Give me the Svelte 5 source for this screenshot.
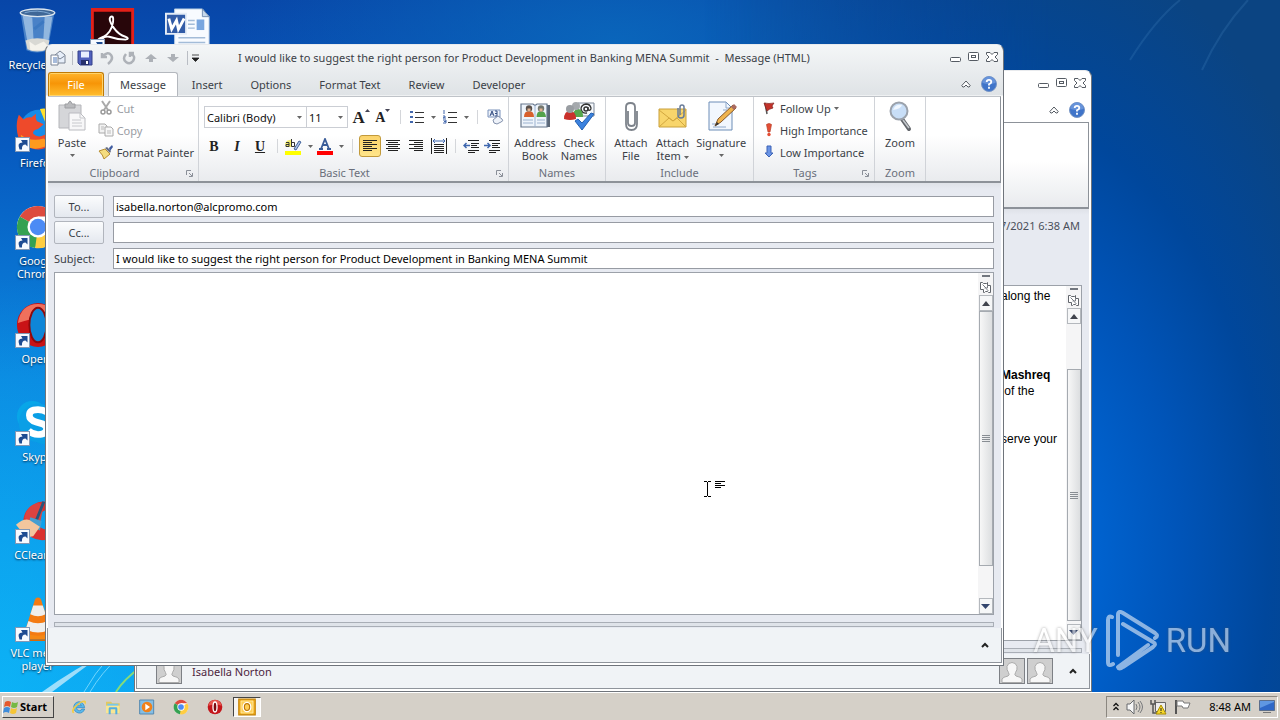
<script>
  const subject = 'I would like to suggest the right person for Product Development in Banking MENA Summit';

  // one list per desktop column
  const columns = [
    [
      { icon: 'bin', label: 'Recycle Bin' },
      { icon: 'firefox', label: 'Firefox', linked: true },
      { icon: 'chrome', label: 'Google Chrome', linked: true },
      { icon: 'opera', label: 'Opera', linked: true },
      { icon: 'skype', label: 'Skype', linked: true },
      { icon: 'ccleaner', label: 'CCleaner', linked: true },
      { icon: 'vlc', label: 'VLC media player', linked: true }
    ],
    [{ icon: 'acrobat', label: 'Acrobat', linked: true }],
    [{ icon: 'word', label: 'Document' }]
  ];

  const tabs = ['Message', 'Insert', 'Options', 'Format Text', 'Review', 'Developer'];
  const tasks = ['explorer', 'folder', 'player', 'chrome', 'operaRed'];

  let activeTab = $state('Message');
  let to = $state('isabella.norton@alcpromo.com');
  let cc = $state('');
  let subjectText = $state(subject);
  let align = $state('left');
</script>

{#snippet caret()}
  <svg class="caret" width="5" height="3" viewBox="0 0 5 3"><path d="M0 0h5L2.500 3z" fill="#666" /></svg>
{/snippet}

{#snippet launcher()}
  <button class="launcher" aria-label="More options">
    <svg width="7" height="7" viewBox="0 0 7 7"><path d="M.5 5V.5H5M3 3l3 3M6.500 3v3.500H3" fill="none" stroke="#8a8f98" /></svg>
  </button>
{/snippet}

{#snippet windowButtons()}
  <div class="window-buttons">
    <button aria-label="Minimize"><svg width="12" height="12" viewBox="0 0 12 12"><rect x=".5" y="6.500" width="10" height="4" rx="1" fill="#fff" stroke="#555b63" /></svg></button>
    <button aria-label="Maximize"><svg width="12" height="12" viewBox="0 0 12 12"><rect x=".5" y="1.500" width="10" height="8" rx="1" fill="#fff" stroke="#555b63" /><rect x="3.500" y="4.500" width="4" height="2" fill="none" stroke="#555b63" /></svg></button>
    <button aria-label="Close"><svg width="12" height="12" viewBox="0 0 12 12"><path d="M.5 1.500h3.500l2 2 2-2h3.500v2L9 6l2.500 2.500v2H8l-2-2-2 2H.5v-2L3 6 .5 3.500z" fill="#fff" stroke="#555b63" /></svg></button>
  </div>
{/snippet}

{#snippet ribbonHelp()}
  <div class="ribbon-help">
    <button aria-label="Minimize the ribbon"><svg width="10" height="8" viewBox="0 0 10 8"><path d="M.8 5.500L5 1l4.200 4.500-1 1.500H7L5 5 3 7H1.800z" fill="#fff" stroke="#555b63" /></svg></button>
    <button aria-label="Help">
      <svg width="16" height="16" viewBox="0 0 16 16"><circle cx="8" cy="8" r="7.500" fill="#3f74c9" stroke="#7795c5" /><path d="M1.500 7a6.500 6.500 0 0 1 13 0Q8 9 1.500 7z" fill="#6793da" /><path d="M5.700 6Q5.700 3.800 8 3.800T10.300 6Q10.300 7.200 8 8.300V9.500M8 10.800v1.900" fill="none" stroke="#fff" stroke-width="1.800" /></svg>
    </button>
  </div>
{/snippet}

{#snippet avatar()}
  <svg class="avatar" width="26" height="26" viewBox="0 0 26 26">
    <rect x=".5" y=".5" width="25" height="25" fill="#cfcfcf" stroke="#7d8085" />
    <path d="M3 24.500V21q1-2 6-3 2-1 .5-3.500Q7.500 12 8 8.500 9 4.500 13 4.500t5 4q.5 3.500-1.500 6-1.500 2.500.5 3.500 5 1 6 3v3.500z" fill="#f7f7f7" stroke="#aaa" />
  </svg>
{/snippet}

{#snippet collapse()}
  <button class="collapse" aria-label="Expand people pane"><svg width="8" height="6" viewBox="0 0 8 6"><path d="M1 5l3-3 3 3" fill="none" stroke="#222" stroke-width="2" /></svg></button>
{/snippet}

{#snippet scrollbar(kind)}
  <div class="scrollbar {kind}">
    <div class="split"></div>
    <button class="ruler" aria-label="Select browse object">
      <svg width="14" height="14" viewBox="0 0 14 14"><path d="M1.500 2.500h2l1 1h3l1-1V5.500h3v7h-2l-1-1h-2l-1 1h-1v-3h-3z" fill="#fff" stroke="#62666d" /><path d="M3.500 4.500l4 4M8.500 5.500v2.500h-3M7.500 9.500l2 1" fill="none" stroke="#7a7e85" /></svg>
    </button>
    <button class="step" aria-label="Scroll up"><svg width="8" height="5" viewBox="0 0 8 5"><path d="M0 5h8L4 0z" fill="#40444d" /></svg></button>
    <div class="track">
      <div class="thumb"><svg width="8" height="7" viewBox="0 0 8 7"><path d="M0 .5h8M0 2.500h8M0 4.500h8M0 6.500h8" stroke="#888d93" /></svg></div>
    </div>
    <button class="step" aria-label="Scroll down"><svg width="9" height="5" viewBox="0 0 9 5"><path d="M0 0h9L4.500 5z" fill="#34466e" /></svg></button>
  </div>
{/snippet}

{#snippet appIcon(name, size)}
  <svg width={size} height={size} viewBox="0 0 48 48">
    {#if name === 'bin'}
      <path d="M6 6l6 38q11 5 22 0l7-38z" fill="#6d9fd6" fill-opacity=".65" />
      <path d="M8 8l6 33 6 3-2-34zM31 9l-2 33 5-2 5-31z" fill="#d9ebf8" fill-opacity=".5" />
      <path d="M11 34q12-5 25 0l-2 9q-11 5-21 0z" fill="#d9d9d4" />
      <path d="M15 35l6 4 9-4 4 4-4 5H16z" fill="#f5f3ec" />
      <path d="M20 22l10-8" fill="none" stroke="#2a6cba" stroke-width="3" opacity=".4" />
      <ellipse cx="23.500" cy="5" rx="18" ry="4" fill="#3f6797" stroke="#dbe5ee" stroke-width="1.500" />
      <path d="M10 5q13-4 27 1" fill="none" stroke="#7fa9d5" />
    {:else if name === 'firefox'}
      <circle cx="25" cy="24" r="20" fill="#168ce8" />
      <path d="M26 3q14-2 19 10 4 14-4 24l-9-19z" fill="#ffe02c" />
      <path d="M4 9l5 5q4-3 8-2l5-4q-1 5 1 8l7 3-6 5q-6 1-5 5 5 5 12 1 10-2 12-13 4 14-5 23-9 8-21 4Q3 40 2 25 1 17 4 9z" fill="#ee4a2b" />
      <path d="M6 30q10 8 24 4l6 6q-14 8-24 2-5-4-6-12z" fill="#ff9a1e" />
    {:else if name === 'chrome'}
      <circle cx="24" cy="24" r="22" fill="#fff" />
      <path d="M24 24L5 13A22 22 0 0 1 43 13H24z" fill="#dd4b3e" />
      <path d="M24 24L5 13a22 22 0 0 0 16 33l9-17z" fill="#35a152" />
      <path d="M24 24l19-11a22 22 0 0 1-22 33z" fill="#ffcd41" />
      <circle cx="24" cy="24" r="11" fill="#fff" /><circle cx="24" cy="24" r="8.500" fill="#4c8bf5" />
    {:else if name === 'opera'}
      <ellipse cx="24" cy="24" rx="22" ry="23" fill="#c91316" />
      <path d="M3 22Q6 2 24 2t21 20q-18-9-42 0z" fill="#f0705c" />
      <ellipse cx="24" cy="24" rx="9" ry="18" fill="#0e86d8" stroke="#8e090b" stroke-width="2" />
    {:else if name === 'operaRed'}
      <ellipse cx="24" cy="24" rx="22" ry="22" fill="#c4161b" />
      <path d="M4 20Q8 3 24 3t20 17q-18-7-40 0z" fill="#e8574f" />
      <ellipse cx="24" cy="24" rx="6" ry="15" fill="#7c0a0e" stroke="#fff" stroke-width="4" />
    {:else if name === 'skype'}
      <circle cx="18" cy="17" r="16" fill="#08a6e8" /><circle cx="30" cy="30" r="16" fill="#08a0e4" /><circle cx="24" cy="24" r="20" fill="#0a9fe6" />
      <path d="M34 13q-5-3-10-3-9 0-9 6 0 5 7 7l7 2q4 2 4 5 0 6-9 6-6 0-10-4" fill="none" stroke="#fff" stroke-width="7" />
    {:else if name === 'ccleaner'}
      <path d="M41 8Q30 0 19 7 7 14 9 29l8 12q13 7 25-2V29q-10 8-17 0-5-10 4-15 6-3 12 2z" fill="#d93230" />
      <path d="M10 20Q12 8 24 5l6 2-4 20-10 4z" fill="#dc4340" />
      <path d="M30 4L22 24" stroke="#28557b" stroke-width="3" />
      <path d="M16 20l12 4-2 10-12-6z" fill="#459fd1" />
      <path d="M1 28q8-7 14-5l11 7-7 10-7 1z" fill="#f3c69d" />
    {:else if name === 'vlc'}
      <path d="M8 37h32l6 8H2z" fill="#f58814" /><path d="M2 45h44v2H2z" fill="#d86908" />
      <path d="M21 3q3-3 6 0l11 35q-14 7-28 0z" fill="#f47b12" />
      <path d="M19 10h10l3 9q-8 4-16 0zM14 26q10 5 20 0l3 9q-13 6-26 0z" fill="#efefed" />
    {:else if name === 'acrobat'}
      <path d="M1 0h45v47H1z" fill="#e32019" /><path d="M4 4h39v43H4z" fill="#28060a" />
      <path d="M9 37q-5-3 5-7 8-4 10-15 1-7-2-6-4 2 3 12 5 7 12 9 5 2 0 3-8 0-17-3-6-1-8 4-2 3-3 3z" fill="none" stroke="#fff" stroke-width="2" />
    {:else if name === 'word'}
      <path d="M10 1h29l7 8v38H10z" fill="#f8fbff" stroke="#b5cbe1" /><path d="M39 1v8h7z" fill="#c8d9ec" stroke="#7790b1" />
      <path d="M14 31h28M14 36h28M14 41h28M24 13h7M24 17h7M24 21h7" stroke="#a3bcd8" stroke-width="1.500" />
      <path d="M33 12h8v11h-8z" fill="#79a6df" />
      <path d="M1 6h21v21H1z" fill="#325ca7" stroke="#e5edf7" stroke-width="2" />
      <path d="M4 11l3 11 5-9 2 9 6-11" fill="none" stroke="#fff" stroke-width="3" />
    {:else if name === 'explorer'}
      <path d="M41 30q-5 14-18 12Q9 39 8 25 9 10 24 8q14 1 17 18H16q2 10 10 9 5 0 6-5zM17 20h14q-2-6-7-6-5 1-7 6z" fill="#5ab9ec" stroke="#2783c0" stroke-width="2" />
      <path d="M6 43Q-3 34 14 19 33 2 43 5q5 4-2 14 2-8-3-9Q29 9 15 24 4 37 10 41z" fill="#f2cc45" />
    {:else if name === 'folder'}
      <path d="M3 8h15l4 5h22v30H3z" fill="#e5c85d" /><path d="M7 14h33v24H7z" fill="#79c7ea" /><path d="M3 20h41v22H3z" fill="#f8e693" />
      <path d="M11 46V29q0-4 4-4h18q4 0 4 4v17h-6V31H17v15z" fill="#52aee1" />
    {:else if name === 'player'}
      <path d="M2 3h42v42H2z" fill="#83bee5" stroke="#5689b0" stroke-width="3" /><circle cx="24" cy="24" r="16" fill="#f0811a" /><path d="M19 14l14 10-14 10z" fill="#fff" />
    {:else if name === 'outlook'}
      <path d="M2 3h44v42H2z" fill="#f2ad1b" stroke="#c48207" stroke-width="3" /><path d="M8 8h32v32H8z" fill="#ffce54" stroke="#fff1b5" stroke-width="2" /><ellipse cx="24" cy="24" rx="9" ry="11" fill="none" stroke="#fff" stroke-width="6" /><ellipse cx="24" cy="24" rx="7" ry="9" fill="none" stroke="#bd7600" stroke-width="3" />
    {/if}
  </svg>
{/snippet}

<div class="screen">
  <main class="desktop">
    <svg class="streaks" width="180" height="90" viewBox="0 0 180 90">
      <path d="M42 90Q72 68 115 46L100 54 52 90z" fill="#fff" opacity=".6" /><path d="M84 90q10-18 26-36M90 90q12-20 28-34" fill="none" stroke="#9ce6ff" opacity=".7" /><path d="M116 90q7-12 26-26" fill="none" stroke="#a5e85a" stroke-width="2" opacity=".8" />
    </svg>
    <svg class="wisps" width="200" height="90" viewBox="0 0 200 90">
      <path d="M50 60Q75 20 100 0M122 70Q140 30 168 0" fill="none" stroke="#5b9bd0" stroke-width="2" opacity=".18" />
    </svg>
    <div class="shortcuts">
      {#each columns as column}
        <div class="column">
          {#each column as item}
            <button class="shortcut">
              <span class="shortcut-icon">
                {@render appIcon(item.icon, 46)}
                {#if item.linked}
                  <svg class="link-arrow" width="15" height="15" viewBox="0 0 15 15"><rect x=".5" y=".5" width="14" height="14" fill="#f7faff" stroke="#8398b5" /><path d="M4.500 12.500Q1.500 5.500 7.500 5.500L6 3h6.500v6.500L10.500 7.500q-4 0-3.500 5z" fill="#1d4b92" /></svg>
                {/if}
              </span>
              <span class="shortcut-label">{item.label}</span>
            </button>
          {/each}
        </div>
      {/each}
    </div>

    <section class="window reading">
      <header class="titlebar">{@render windowButtons()}</header>
      <div class="tabs">{@render ribbonHelp()}</div>
      <div class="ribbon"></div>
      <div class="body">
        <div class="sent">7/2021 6:38 AM</div>
        <div class="editor">
          <div class="mail">
            <p>along the</p>
            <p class="gap"><b>Mashreq</b><br />&nbsp;of the</p>
            <p>serve your</p>
          </div>
          {@render scrollbar('short')}
        </div>
        <div class="splitter"></div>
      </div>
      <footer class="people">
        {@render avatar()}
        <span class="person">Isabella Norton</span>
        {@render avatar()}{@render avatar()}
        {@render collapse()}
      </footer>
    </section>

    <section class="window compose">
      <header class="titlebar">
        <div class="quick">
          <svg width="16" height="16" viewBox="0 0 16 16"><path d="M5 5l5-4 5 4v8H5z" fill="#e7effa" stroke="#7a8494" /><path d="M5.500 6l4.500 3 4.500-3" fill="none" stroke="#7a8494" /><path d="M1 5h7v10H1z" fill="#fff" stroke="#7a8494" /><path d="M3 8h4M3 10h4M3 12h4" stroke="#4e79b7" /></svg>
          <i></i>
          <button aria-label="Save"><svg width="16" height="16" viewBox="0 0 16 16"><path d="M1 1h14v14H3l-2-2z" fill="#5161bd" stroke="#35408a" /><path d="M4 1.500h8v6H4z" fill="#e9efff" /><path d="M4 10h8v5H4z" fill="#27316d" /><path d="M9 11h2v3H9z" fill="#fff" /></svg></button>
          <button aria-label="Undo"><svg width="16" height="16" viewBox="0 0 16 16"><path d="M3 3v4h5M4 6q5-5 8-1t-3 9" fill="none" stroke="#aeb2b8" stroke-width="2.500" /></svg></button>
          <button aria-label="Redo"><svg width="16" height="16" viewBox="0 0 16 16"><path d="M5 4q-4 5 0 8 4 3 7-1 3-5-2-7M9 7V3h4" fill="none" stroke="#aeb2b8" stroke-width="2.500" /></svg></button>
          <button aria-label="Previous item"><svg width="16" height="16" viewBox="0 0 16 16"><path d="M8 4l6 5h-4v3H6V9H2z" fill="#adb1b7" /></svg></button>
          <button aria-label="Next item"><svg width="16" height="16" viewBox="0 0 16 16"><path d="M8 12l6-5h-4V4H6v3H2z" fill="#adb1b7" /></svg></button>
          <i></i>
          <button aria-label="Customize quick access"><svg width="7" height="8" viewBox="0 0 7 8"><path d="M0 1h7M0 4h7L3.500 7.500z" fill="#222" stroke="#222" stroke-width=".8" /></svg></button>
        </div>
        <h1 class="title">{subject} &nbsp;-&nbsp; Message (HTML)</h1>
        {@render windowButtons()}
      </header>

      <nav class="tabs">
        <button class="file">File</button>
        {#each tabs as tab}
          <button class="tab" class:active={activeTab === tab} onclick={() => (activeTab = tab)}>{tab}</button>
        {/each}
        {@render ribbonHelp()}
      </nav>

      <div class="ribbon">
        <section class="group clipboard">
          <div class="tools">
            <button class="big">
              <svg width="32" height="32" viewBox="0 0 32 32"><path d="M3 5h22v23H3z" fill="#d5d6d9" stroke="#b5b6ba" /><path d="M9 6V4h3q2-6 4 0h3v4H9z" fill="#b9babd" stroke="#9d9ea2" /><path d="M13 13h11l5 5v12H13z" fill="#f7f7f8" stroke="#babbc0" /><path d="M24 13v5h5M16 20h9M16 23h10M16 26h10" fill="none" stroke="#c7c8cc" /></svg>
              <span>Paste</span>{@render caret()}
            </button>
            <div class="stack">
              <button class="row muted"><svg width="16" height="16" viewBox="0 0 16 16"><path d="M4 1l6 9M12 1L6 10" stroke="#aaa" stroke-width="2" /><circle cx="5" cy="12" r="2" fill="none" stroke="#999" stroke-width="1.500" /><circle cx="11" cy="12" r="2" fill="none" stroke="#999" stroke-width="1.500" /></svg>Cut</button>
              <button class="row muted"><svg width="16" height="16" viewBox="0 0 16 16"><path d="M1 2h6l2 2v7H1z" fill="#f2f2f2" stroke="#aaa" /><path d="M7 5h6l2 2v7H7z" fill="#f8f8f8" stroke="#aaa" /><path d="M3 5h3M3 7h3M9 9h4M9 11h4" stroke="#bbb" /></svg>Copy</button>
              <button class="row"><svg width="16" height="16" viewBox="0 0 16 16"><path d="M1 7l6-2 5 5-6 5q-1-4-5-8z" fill="#f4dc7f" stroke="#b88e32" /><path d="M7 4l5 5 1-2-4-4z" fill="#646c81" /><path d="M11 4l3-3 1 2-3 4z" fill="#405ca0" /></svg>Format Painter</button>
            </div>
          </div>
          <h2>Clipboard</h2>{@render launcher()}
        </section>

        <section class="group basic">
          <div class="tools lines">
            <div class="line">
              <div class="combo"><select aria-label="Font"><option>Calibri (Body)</option></select>{@render caret()}</div>
              <div class="combo size"><select aria-label="Font size"><option>11</option></select>{@render caret()}</div>
              <button class="tool serif grow" aria-label="Grow font">A<svg width="5" height="3" viewBox="0 0 5 3"><path d="M0 3h5L2.500 0z" fill="#445" /></svg></button>
              <button class="tool serif shrink" aria-label="Shrink font">A<svg width="5" height="3" viewBox="0 0 5 3"><path d="M0 0h5L2.500 3z" fill="#445" /></svg></button>
              <i></i>
              <button class="tool wide" aria-label="Bullets"><svg width="16" height="16" viewBox="0 0 16 16"><path d="M1 2h3v2H1zM1 7h3v2H1zM1 12h3v2H1z" fill="#4267ac" /><path d="M6 3.500h9M6 8.500h9M6 13.500h9" stroke="#333" /></svg>{@render caret()}</button>
              <button class="tool wide" aria-label="Numbering"><svg width="16" height="16" viewBox="0 0 16 16"><path d="M2 1v4M1 7h2v1L1 9h3M1 11h3v3H1M2 12.500h2" fill="none" stroke="#4267ac" /><path d="M6 3.500h9M6 8.500h9M6 13.500h9" stroke="#333" /></svg>{@render caret()}</button>
              <i></i>
              <button class="tool" aria-label="Clear formatting"><svg width="17" height="16" viewBox="0 0 17 16"><path d="M1 1h12v7H1z" fill="#edf2fa" stroke="#7a92bb" /><path d="M3 7l2-5 2 5M4 5h2M8 2h2v5H8M8 4.500h2" fill="none" stroke="#344e83" /><path d="M6 11l5-4 4 3q2 2-1 3l-4 2q-4 0-4-4z" fill="#eef2f9" stroke="#8391ac" /></svg></button>
            </div>
            <div class="line second">
              <button class="tool serif"><b>B</b></button>
              <button class="tool serif"><em>I</em></button>
              <button class="tool serif"><u>U</u></button>
              <i></i>
              <button class="tool wide" aria-label="Highlight"><svg width="18" height="17" viewBox="0 0 18 17"><path d="M1 5q3-4 7-3v7H2z" fill="#f4ee6c" /><path d="M2 4.500h3v4H2v-2h3M7.500 1v7.500h3v-4h-3" fill="none" stroke="#333" /><path d="M10 11l5-8 2 1-5 8z" fill="#afc4e7" stroke="#41639c" /><path d="M1 13h16v4H1z" fill="#ff0" /></svg>{@render caret()}</button>
              <button class="tool wide" aria-label="Font color"><svg width="16" height="17" viewBox="0 0 16 17"><path d="M4 11L8 1l4 10M5 7h6M2 11h4M10 11h4" fill="none" stroke="#3b5d99" stroke-width="1.800" /><path d="M0 13h16v4H0z" fill="#f00" /></svg>{@render caret()}</button>
              <i></i>
              {#each ['left', 'center', 'right'] as side}
                <button class="tool align" class:on={align === side} onclick={() => (align = side)} aria-label="Align {side}">
                  <svg width="14" height="12" viewBox="0 0 14 12">
                    <path d="M0 .5h14M0 4.500h14M0 8.500h14" stroke="#222" />
                    <path d={side === 'left' ? 'M0 2.500h9M0 6.500h9M0 10.500h9' : side === 'center' ? 'M2 2.500h10M2 6.500h10M2 10.500h10' : 'M5 2.500h9M5 6.500h9M5 10.500h9'} stroke="#222" />
                  </svg>
                </button>
              {/each}
              <button class="tool align" aria-label="Justify"><svg width="16" height="16" viewBox="0 0 16 16"><path d="M.5 0v16M15.500 0v16M3 6.500h10M3 8.500h10M3 10.500h10M3 12.500h10M3 14.500h10" stroke="#222" /><path d="M2 3h12M4 1L2 3l2 2M12 1l2 2-2 2" fill="none" stroke="#3d66ae" /></svg></button>
              <i></i>
              <button class="tool" aria-label="Decrease indent"><svg width="16" height="13" viewBox="0 0 16 13"><path d="M5 .5h11M8 3.500h8M8 5.500h6M8 7.500h8M5 10.500h11M5 12.500h7" stroke="#222" /><path d="M7 5.500H1M3.500 3L1 5.500 3.500 8" fill="none" stroke="#3d66ae" stroke-width="1.500" /></svg></button>
              <button class="tool" aria-label="Increase indent"><svg width="16" height="13" viewBox="0 0 16 13"><path d="M5 .5h11M8 3.500h8M8 5.500h6M8 7.500h8M5 10.500h11M5 12.500h7" stroke="#222" /><path d="M0 5.500h6M3.500 3L6 5.500 3.500 8" fill="none" stroke="#3d66ae" stroke-width="1.500" /></svg></button>
            </div>
          </div>
          <h2>Basic Text</h2>{@render launcher()}
        </section>

        <section class="group names">
          <div class="tools">
            <button class="big">
              <svg width="32" height="32" viewBox="0 0 32 32"><path d="M28 5h3v22h-3z" fill="#5b6777" /><path d="M2 4h12l2 1.500L18 4h10v23H2z" fill="#eef4fb" stroke="#66768c" stroke-width="1.200" /><path d="M16 5v22M4 20h10M4 23h10M18 20h8M18 23h8" stroke="#9cb2cf" /><path d="M5 17q0-6 5-6t5 6z" fill="#d8602d" /><path d="M17.500 17q0-6 4.500-6t5 6z" fill="#53a24a" /><circle cx="10" cy="8.500" r="3.200" fill="#59504b" /><circle cx="22" cy="8.500" r="3.200" fill="#73776f" /><path d="M8.500 8.500h3v3h-3zM20.500 8.500h3v3h-3z" fill="#e3b491" /></svg>
              <span>Address<br />Book</span>
            </button>
            <button class="big">
              <svg width="32" height="32" viewBox="0 0 32 32"><path d="M15 3h16v13H15z" fill="#f5f8fc" stroke="#7c8796" /><circle cx="23" cy="9" r="2" fill="none" stroke="#333" stroke-width="1.500" /><path d="M25 7v3q3 1 3-2-1-4-5-4-5 1-5 5 1 5 6 4" fill="none" stroke="#333" stroke-width="1.300" /><path d="M10 17q0-8 5-8t5 8z" fill="#55a64c" /><circle cx="13" cy="6" r="4" fill="#a5a9ad" /><path d="M1 19q0-8 6-8t6 8q-6 2-12 0z" fill="#c9302b" /><circle cx="7" cy="9" r="4" fill="#999da2" /><path d="M12 21l3-2 4 4 9-10 3 1-12 16z" fill="#3b82df" stroke="#2461b0" /></svg>
              <span>Check<br />Names</span>
            </button>
          </div>
          <h2>Names</h2>
        </section>

        <section class="group include">
          <div class="tools">
            <button class="big">
              <svg width="32" height="32" viewBox="0 0 32 32"><path d="M13 11v12q0 3 3.500 3t3.500-3V7q0-4-4.500-4T11 7v17q0 6 5.500 6t5.500-6V11" fill="none" stroke="#7d838b" stroke-width="1.800" /></svg>
              <span>Attach<br />File</span>
            </button>
            <button class="big">
              <svg width="32" height="32" viewBox="0 0 32 32"><path d="M2 9h27v18H2z" fill="#f8d56b" stroke="#c9a03c" /><path d="M2 27l10-9 4 3 4-3 9 9M2 10l14 11 13-11" fill="none" stroke="#d2a73f" /><path d="M21 8v7q0 3 3 3t3-3V7q0-2-2-2t-2 2v8" fill="none" stroke="#697c98" stroke-width="1.500" /></svg>
              <span>Attach<br />Item {@render caret()}</span>
            </button>
            <button class="big signature">
              <svg width="32" height="32" viewBox="0 0 32 32"><path d="M4 2h17l6 6v22H4z" fill="#f2f7fe" stroke="#6c8db7" /><path d="M21 2v6h6M7 24h5M8 27h13M18 10h4" fill="none" stroke="#8ea8cb" /><path d="M10 26l3-7L28 5l3 3-15 14z" fill="#f0b44e" stroke="#85572b" /><path d="M26 7l3-3 3 3-3 3z" fill="#a96b61" /><path d="M10 26l2-4 2 2z" fill="#333" /></svg>
              <span>Signature</span>{@render caret()}
            </button>
          </div>
          <h2>Include</h2>
        </section>

        <section class="group tags">
          <div class="tools">
            <div class="stack">
              <button class="row"><svg width="16" height="16" viewBox="0 0 16 16"><path d="M4 3l2 11" stroke="#555" stroke-width="1.500" /><path d="M3 3q5 1 10 0l-2 3 1 2Q8 9 6 11z" fill="#c3322a" stroke="#80241f" stroke-width=".7" /></svg>Follow Up {@render caret()}</button>
              <button class="row"><svg width="16" height="16" viewBox="0 0 16 16"><path d="M5.500 2.500q2.500-2 5 0L9 10H7z" fill="#e54e35" stroke="#b6422d" stroke-width=".7" /><circle cx="8" cy="12.500" r="1.700" fill="#e54e35" /></svg>High Importance</button>
              <button class="row"><svg width="16" height="16" viewBox="0 0 16 16"><path d="M6 2h4v7h2l-4 4-4-4h2z" fill="#6a94e5" stroke="#3c63b6" /></svg>Low Importance</button>
            </div>
          </div>
          <h2>Tags</h2>{@render launcher()}
        </section>

        <section class="group zoom">
          <div class="tools">
            <button class="big">
              <svg width="32" height="32" viewBox="0 0 32 32"><path d="M18 19l7 10" stroke="#63666b" stroke-width="4" stroke-linecap="round" /><path d="M19 20l6 8" stroke="#c5c9ce" stroke-width="1.500" /><circle cx="15" cy="11" r="8.500" fill="#c8def7" stroke="#9ba2ac" stroke-width="2" /><path d="M9 10q2-6 9-5-1 4-9 5z" fill="#f0f7ff" /></svg>
              <span>Zoom</span>
            </button>
          </div>
          <h2>Zoom</h2>
        </section>
      </div>

      <div class="body">
        <div class="fields">
          <button class="address">To...</button><input aria-label="To" bind:value={to} />
          <button class="address">Cc...</button><input aria-label="Cc" bind:value={cc} />
          <label for="subject">Subject:</label><input id="subject" bind:value={subjectText} />
        </div>
        <div class="editor">
          <textarea aria-label="Message body"></textarea>
          {@render scrollbar('long')}
        </div>
        <div class="splitter"></div>
      </div>
      <footer class="people">{@render collapse()}</footer>
    </section>

    <svg class="pointer" width="22" height="18" viewBox="0 0 22 18"><path d="M0 1.500h3M4 1.500h3M3.500 2v14M0 16.500h3M4 16.500h3M11 1.500h10M11 3.500h6M11 5.500h10M11 7.500h6" stroke="#000" /></svg>

    <div class="watermark">
      <span>ANY</span>
      <svg width="56" height="62" viewBox="0 0 56 62"><path d="M8 7Q4 5 4 10v42q0 5 5 2M14 45V5q0-5 5-2l32 20q4 3 0 5M19 14l30 18q4 2 0 5L19 57q-4 3-5 0l30-22" fill="none" stroke="#fff" stroke-width="4" stroke-linecap="round" stroke-linejoin="round" /></svg>
      <span>RUN</span>
    </div>
  </main>

  <footer class="taskbar">
    <button class="start">
      <svg width="16" height="16" viewBox="0 0 16 16"><path d="M2 3q3-2 6 0L7 8Q4 6 1 8z" fill="#e5582c" /><path d="M9 3q3 2 6 0l-1 5q-3 2-6 0z" fill="#76b943" /><path d="M1 9q3-2 6 0l-1 5q-3-2-6 0z" fill="#3f8cda" /><path d="M8 9q3 2 6 0l-1 5q-3 2-6 0z" fill="#f5c535" /></svg>
      Start
    </button>
    <div class="launch">
      {#each tasks as task}
        <button aria-label={task}>{@render appIcon(task, 16)}</button>
      {/each}
      <button class="running" aria-label="outlook">{@render appIcon('outlook', 18)}</button>
    </div>
    <div class="tray">
      <svg width="6" height="9" viewBox="0 0 6 9"><path d="M.5 4L3 1.500 5.500 4M.5 8L3 5.500 5.500 8" fill="none" stroke="#111" stroke-width="1.300" /></svg>
      <svg width="17" height="16" viewBox="0 0 17 16"><path d="M1 5h3l4-4v14l-4-4H1z" fill="#f7f7f7" stroke="#66696c" /><path d="M10 5q2 3 0 6M12 3q4 5 0 10M14 2q5 6 0 12" fill="none" stroke="#77797b" /></svg>
      <svg width="17" height="16" viewBox="0 0 17 16"><path d="M5.500 3.500h10v9h-10z" fill="#eee" stroke="#666" /><path d="M1 1v4h4V1M3 5v9h4" fill="none" stroke="#555" stroke-width="1.500" /><path d="M11 6l5 9H6z" fill="#f7d82b" stroke="#a88b00" /><path d="M11 9v3M11 13v1" stroke="#222" /></svg>
      <svg width="17" height="16" viewBox="0 0 17 16"><path d="M2 1v14" stroke="#555" stroke-width="2" /><path d="M3 2h6l1 2h6l-2 5H9L8 7H3z" fill="#fff" stroke="#777" /></svg>
      <time>8:48 AM</time>
      <svg width="16" height="14" viewBox="0 0 16 14"><path d="M.5.5h15v10H.5z" fill="#2f68c7" stroke="#5b6e8c" /><path d="M1 8L15 2v-1H1z" fill="#5f97e2" /><path d="M4 12.500h8" stroke="#777" /></svg>
    </div>
  </footer>
</div>

<style>
  :global(body) {
    margin: 0;
    overflow: hidden;
  }

  .screen {
    display: flex;
    flex-direction: column;
    height: 100vh;
    font-family: 'Noto Sans', 'Open Sans', sans-serif;
    font-size: 11px;
    line-height: 13px;
    color: #3b3f47;
  }

  button {
    padding: 0;
    border: 0;
    background: none;
    font: inherit;
    color: inherit;
  }

  svg {
    display: block;
    flex-shrink: 0;
  }

  h1,
  h2,
  p {
    margin: 0;
    font: inherit;
  }

  .desktop {
    position: relative;
    flex: 1;
    min-height: 0;
    overflow: hidden;
    background:
      radial-gradient(ellipse 20% 60% at 0 100%, rgba(12, 190, 250, 0.6), transparent),
      radial-gradient(ellipse 30% 25% at 48% 6%, rgba(10, 104, 188, 0.9), transparent),
      linear-gradient(180deg, #0846a8 0, #075bc0 22%, #0b86df 55%, #0da0ef 100%);
  }
  .desktop::before {
    content: '';
    position: absolute;
    inset: 0 0 0 55%;
    background: radial-gradient(ellipse 60% 80% at 50% 80%, #006ad8 0, #0068d8 20%, #0054b8 55%, #00479c 80%, #0b4482 115%);
    mask-image: linear-gradient(90deg, transparent, #000 60%);
  }

  .streaks {
    position: absolute;
    left: 0;
    bottom: 0;
  }
  .wisps {
    position: absolute;
    top: 0;
    right: 0;
  }

  .shortcuts {
    position: absolute;
    top: 8px;
    left: 0;
    display: flex;
  }
  .column {
    display: grid;
    grid-auto-rows: 98px;
    align-content: start;
    width: 75px;
  }
  .shortcut {
    display: flex;
    flex-direction: column;
    align-items: center;
    gap: 4px;
    color: #fff;
    text-shadow: 0 1px 2px #024;
  }
  .shortcut-icon {
    position: relative;
  }
  .link-arrow {
    position: absolute;
    left: 0;
    bottom: 0;
  }
  .shortcut-label {
    width: 66px;
  }

  .window {
    position: absolute;
    z-index: 1;
    display: flex;
    flex-direction: column;
    box-sizing: border-box;
    padding: 0 2px 2px;
    border: 1px solid #6f747b;
    border-top-color: #e8eaed;
    border-radius: 7px 7px 0 0;
    background: #fff;
  }
  .reading {
    inset: 70px 188px 0 134px;
  }
  .compose {
    inset: 44px 276px 26px 45px;
    background: linear-gradient(180deg, #f4f6f7 0, #dfe3e6 50px, #fff 51px);
  }

  .titlebar {
    display: flex;
    align-items: center;
    height: 26px;
    padding: 0 3px 0 2px;
  }
  .title {
    overflow: hidden;
    line-height: 22px;
    white-space: nowrap;
  }
  .window-buttons {
    display: flex;
    flex: 1;
    justify-content: flex-end;
    gap: 6px;
    padding-bottom: 2px;
  }
  .quick {
    display: flex;
    flex: 1;
    align-items: center;
    gap: 6px;
  }

  i {
    width: 1px;
    height: 14px;
    background: #b9bdc4;
  }
  .quick i {
    margin-right: -2px;
  }

  .tabs {
    display: flex;
    align-items: flex-end;
    height: 25px;
  }
  .file {
    width: 56px;
    height: 24px;
    border: 1px solid #c07a05;
    border-bottom: 0;
    border-radius: 3px 3px 0 0;
    background: linear-gradient(180deg, #ffb42c, #f79507 45%, #ffbe2f);
    box-shadow: inset 0 0 0 1px #ffd36b;
    color: #fff;
    margin-right: 4px;
  }
  .tab {
    height: 24px;
    padding: 0 13px;
    border: 1px solid transparent;
    border-bottom: 0;
  }
  .tab.active {
    border-color: #b4b8be;
    border-radius: 3px 3px 0 0;
    background: #fff;
    padding: 0 11px;
  }
  .ribbon-help {
    display: flex;
    align-items: center;
    gap: 10px;
    height: 24px;
    margin-left: auto;
    padding-right: 4px;
  }

  .ribbon {
    display: flex;
    box-sizing: border-box;
    height: 87px;
    flex-shrink: 0;
    padding-left: 1px;
    border: 1px solid #8d9299;
    border-width: 1px 1px 2px 0;
    background: linear-gradient(180deg, #fff 0, #fff 45%, #e9ebee 100%);
  }
  .compose .ribbon {
    border-top-color: #bfc3c8;
  }
  .group {
    position: relative;
    display: flex;
    flex-direction: column;
    box-sizing: border-box;
    border-right: 1px solid #d0d3d8;
  }
  .group h2 {
    height: 15px;
    color: #6a6f7b;
    text-align: center;
  }
  .clipboard {
    width: 150px;
  }
  .clipboard h2,
  .basic h2,
  .tags h2 {
    padding-right: 18px;
  }
  .names {
    width: 97px;
  }
  .basic {
    width: 310px;
  }
  .include {
    width: 148px;
  }
  .tags {
    width: 121px;
  }
  .zoom {
    width: 51px;
  }
  .launcher {
    position: absolute;
    right: 5px;
    bottom: 4px;
  }

  .tools {
    display: flex;
    justify-content: center;
    flex: 1;
    padding: 3px 4px 0;
  }
  .clipboard .tools {
    justify-content: space-between;
    padding-left: 2px;
  }
  .tags .tools {
    justify-content: flex-start;
    padding-left: 7px;
  }
  .big {
    display: flex;
    flex-direction: column;
    align-items: center;
    width: 42px;
  }
  .big > svg:first-child {
    margin-bottom: 4px;
  }
  .big > .caret {
    margin-top: 5px;
  }
  .names .big {
    width: 44px;
  }
  .big.signature {
    width: 56px;
  }
  .big span {
    white-space: nowrap;
  }
  span > :global(.caret) {
    display: inline-block;
    vertical-align: middle;
  }

  .stack {
    display: flex;
    flex-direction: column;
    margin-top: -3px;
  }
  .row {
    display: flex;
    align-items: center;
    gap: 3px;
    height: 22px;
    white-space: nowrap;
  }
  .muted {
    color: #9a9da3;
  }

  .tools.lines {
    flex-direction: column;
    justify-content: flex-start;
    gap: 7px;
    padding: 9px 4px 0 5px;
  }
  .line {
    display: flex;
    align-items: center;
    gap: 4px;
    height: 22px;
  }
  .line i {
    margin: 0 4px;
    background: #d4d6da;
  }
  .combo {
    display: flex;
    align-items: center;
    box-sizing: border-box;
    width: 105px;
    height: 22px;
    padding-right: 4px;
    border: 1px solid #cbced4;
    background: #fff;
  }
  .combo.size {
    width: 43px;
    margin-left: -5px;
  }
  select {
    flex: 1;
    min-width: 0;
    padding: 0 2px;
    border: 0;
    appearance: none;
    background: none;
    font: inherit;
    color: #111;
  }
  .tool {
    display: flex;
    align-items: center;
    justify-content: center;
    width: 18px;
    height: 22px;
  }
  .wide {
    width: 29px;
    gap: 6px;
  }
  .serif {
    font-family: 'Liberation Serif', serif;
    font-size: 14px;
    font-weight: bold;
    color: #222;
  }
  .second {
    gap: 3px;
  }
  .second i {
    margin: 0 3px 0 4px;
  }
  .second .serif {
    width: 20px;
  }
  .grow {
    font-size: 17px;
  }
  .grow svg,
  .shrink svg {
    align-self: flex-start;
    margin-top: 3px;
  }
  .align {
    box-sizing: border-box;
    width: 22px;
    border: 1px solid transparent;
    border-radius: 3px;
    margin-right: -2px;
  }
  .align.on {
    border-color: #c29a3b;
    background: linear-gradient(180deg, #fbd36b, #ffe58a);
  }

  .body {
    display: flex;
    flex-direction: column;
    flex: 1;
    min-height: 0;
    padding: 0 7px 0 6px;
    background: linear-gradient(180deg, #dfe2e8 0, #e7eaf1 6px, #e7eaf1 100%);
  }
  .fields {
    display: grid;
    grid-template-columns: 50px 1fr;
    align-items: center;
    gap: 3px 9px;
    padding: 12px 0 2px;
  }
  .fields label {
    line-height: 23px;
  }
  .fields input {
    box-sizing: border-box;
    height: 21px;
    min-width: 0;
    padding: 0 2px;
    border: 1px solid #979ba3;
    background: #fff;
    font: inherit;
    color: #000;
  }
  .address {
    height: 23px;
    border: 1px solid #b1b5bd;
    border-radius: 2px;
    background: linear-gradient(180deg, #fbfcfd, #e4e8ef);
  }
  .editor {
    display: flex;
    flex: 1;
    min-height: 0;
    border: 1px solid #9ca1a9;
    background: #fff;
  }
  textarea {
    flex: 1;
    border: 0;
    outline: 0;
    resize: none;
    font: inherit;
  }
  .splitter {
    height: 3px;
    margin: 7px 0 1px;
    border: 1px solid #a9aeb6;
    background: #dfe3e9;
  }

  .scrollbar {
    display: flex;
    flex-direction: column;
    align-items: center;
    width: 15px;
    background: #f5f5f6;
  }
  .split {
    width: 8px;
    height: 2px;
    margin: 2px 0;
    background: #72777f;
  }
  .ruler {
    height: 16px;
  }
  .split,
  .ruler,
  .step {
    flex-shrink: 0;
  }
  .step {
    display: flex;
    align-items: center;
    justify-content: center;
    box-sizing: border-box;
    width: 14px;
    height: 16px;
    border: 1px solid #b4b8bd;
    background: #f6f7f8;
  }
  .track {
    display: flex;
    flex-direction: column;
    flex: 1;
    min-height: 0;
    width: 14px;
  }
  .thumb {
    display: flex;
    align-items: center;
    justify-content: center;
    box-sizing: border-box;
    height: 89%;
    border: 1px solid #a5aab0;
    background: linear-gradient(90deg, #f7f7f7, #dcdee0);
  }
  .short .thumb {
    height: 84%;
    margin-top: 45px;
  }

  .people {
    display: flex;
    align-items: center;
    height: 34px;
    padding: 0 12px;
    border: 1px solid #8f949b;
    border-top: 0;
    margin: 0 -1px;
    background: #f0f3f6;
  }
  .collapse {
    margin-left: auto;
  }
  .reading .people {
    padding-left: 19px;
  }
  .person {
    flex: 1;
    padding-left: 10px;
    color: #4d2540;
  }
  .people .person ~ :global(.avatar) {
    margin-right: 2px;
  }
  .reading .collapse {
    margin-left: 14px;
  }

  .sent {
    height: 66px;
    box-sizing: border-box;
    padding: 10px 2px 0 0;
    flex-shrink: 0;
    margin-bottom: 10px;
    color: #4a4f5a;
    text-align: right;
  }
  .mail {
    width: 65px;
    margin-left: auto;
    padding-top: 2px;
    font-family: 'Liberation Sans', Arial, sans-serif;
    font-size: 12px;
    line-height: 16px;
    white-space: nowrap;
    color: #000;
  }
  .mail .gap {
    margin: 63px 0 32px;
  }

  .pointer {
    position: absolute;
    z-index: 2;
    left: 704px;
    top: 480px;
  }

  .watermark {
    position: absolute;
    z-index: 2;
    right: 49px;
    bottom: 20px;
    display: flex;
    align-items: center;
    gap: 6px;
    font-family: 'Liberation Sans Narrow', 'Roboto', sans-serif;
    font-size: 33px;
    line-height: 62px;
    color: #fff;
    opacity: 0.55;
    text-shadow: 0 0 3px #555;
  }

  .taskbar {
    display: flex;
    align-items: center;
    box-sizing: border-box;
    height: 28px;
    padding: 2px;
    border-top: 1px solid #fff;
    background: #d5d0c8;
    color: #000;
  }
  .start {
    display: flex;
    align-items: center;
    gap: 1px;
    box-sizing: border-box;
    height: 22px;
    width: 52px;
    border: 1px solid;
    border-color: #fff #444 #444 #fff;
    font-weight: bold;
  }
  .launch {
    display: flex;
    align-items: center;
    gap: 18px;
    padding-left: 17px;
  }
  .launch button {
    display: flex;
    align-items: center;
    justify-content: center;
    height: 20px;
  }
  .launch .running {
    width: 28px;
    border: 1px solid;
    border-color: #444 #fff #fff #444;
    background: #f7f5f1;
    margin-left: -8px;
  }
  .tray {
    display: flex;
    align-items: center;
    gap: 7px;
    box-sizing: border-box;
    height: 22px;
    margin-left: auto;
    padding: 0 2px 0 6px;
    border: 1px solid;
    border-color: #8b8780 #fff #fff #8b8780;
  }
  time {
    margin: 0 1px 0 11px;
  }
</style>
